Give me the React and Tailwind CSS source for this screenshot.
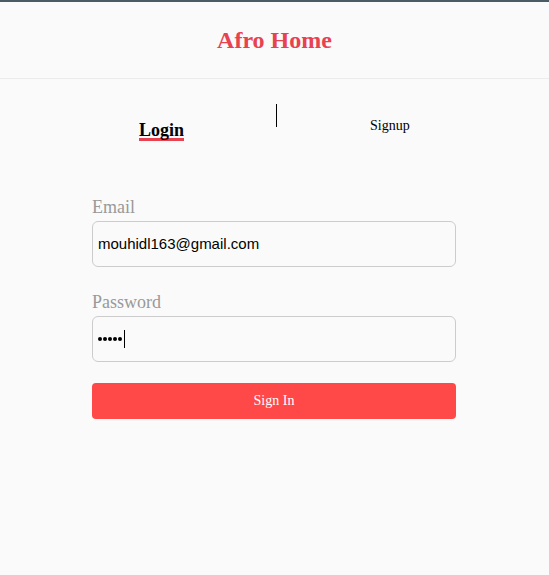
export default function App() {
  return (
    <div className="min-h-[575px] w-full bg-[#fafafa] font-['Liberation_Serif',serif] text-black">
      <header className="h-[79px] border-t-2 border-b border-t-[#4b5b65] border-b-[#ececec] flex items-center justify-center">
        <h1 className="text-[24px] font-bold text-[#e8414f] leading-[28px]">Afro Home</h1>
      </header>

      <div className="h-[40px] mt-[25px] flex items-start pl-[139px]">
        <span className="mt-[18px] block text-[18px] font-bold leading-[16px] border-b-[3px] border-[#e8414f]">
          Login
        </span>
        <div className="ml-[92px] w-px h-[23px] bg-black" />
        <span className="ml-[93px] mt-[14px] block text-[14px] leading-[16px]">Signup</span>
      </div>

      <form className="mt-[53px] mx-[92px] w-[364px] flex flex-col">
        <label className="text-[18px] leading-[20px] text-[#999999] mb-[4px]">Email</label>
        <div className="h-[46px] border border-[#cccccc] rounded-[6px] flex items-center pl-[5px] font-['Liberation_Sans',sans-serif] text-[15px]">
          mouhidl163@gmail.com
        </div>

        <label className="mt-[25px] text-[18px] leading-[20px] text-[#999999] mb-[4px]">Password</label>
        <div className="h-[46px] border border-[#cccccc] rounded-[6px] flex items-center pl-[5px]">
          <div className="flex items-center gap-[1px]">
            <span className="w-[4px] h-[4px] rounded-full bg-black" />
            <span className="w-[4px] h-[4px] rounded-full bg-black" />
            <span className="w-[4px] h-[4px] rounded-full bg-black" />
            <span className="w-[4px] h-[4px] rounded-full bg-black" />
            <span className="w-[4px] h-[4px] rounded-full bg-black" />
          </div>
          <span className="ml-[2px] w-px h-[18px] bg-black" />
        </div>

        <button
          type="button"
          className="mt-[21px] h-[36px] w-full rounded-[4px] bg-[#ff4848] text-white text-[14px] pb-[1px]"
        >
          Sign In
        </button>
      </form>
    </div>
  );
}
